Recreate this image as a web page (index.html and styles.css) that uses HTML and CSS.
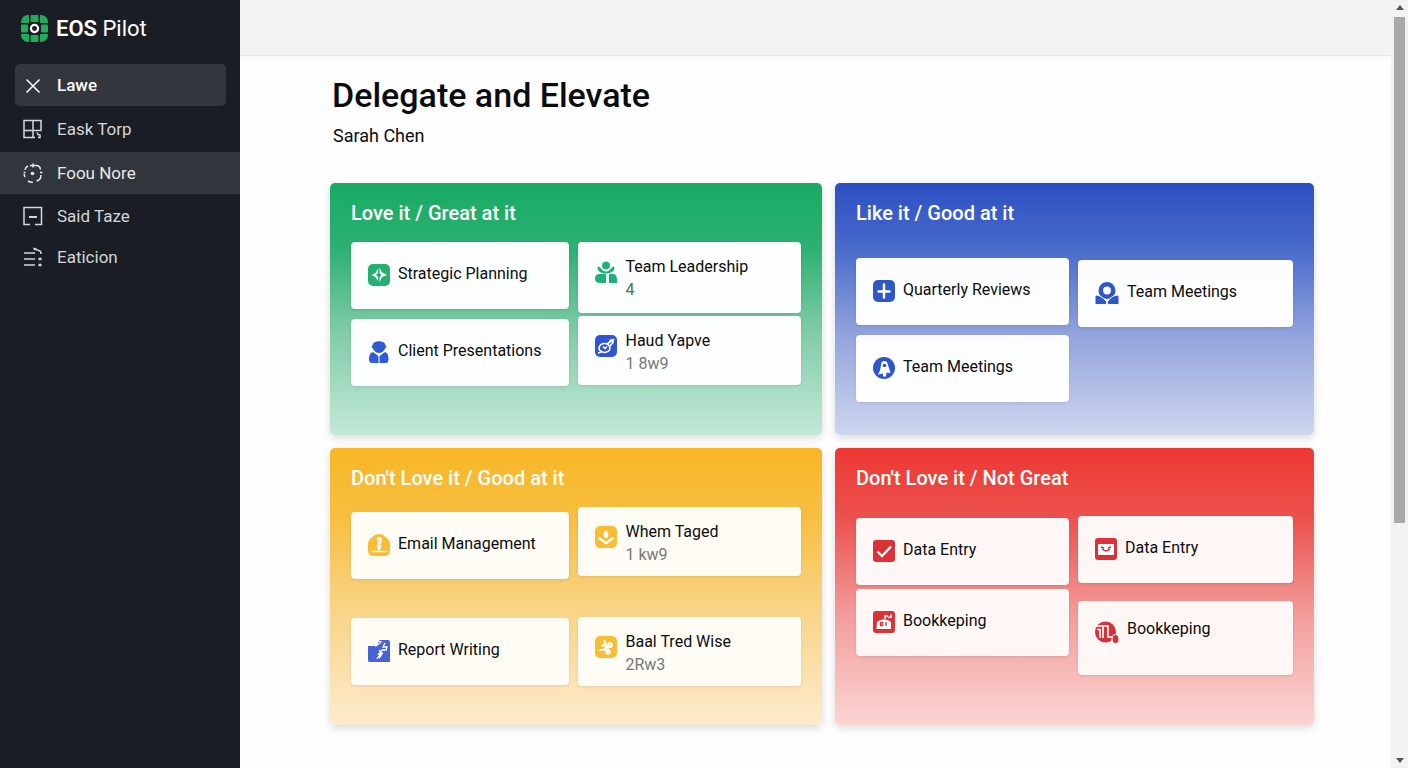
FILE: index.html
```
<!DOCTYPE html>
<html lang="en">
<head>
  <meta charset="UTF-8" />
  <meta name="viewport" content="width=device-width, initial-scale=1.0" />
  <title>EOS Pilot - Delegate and Elevate</title>
  <link rel="stylesheet" href="styles.css">
</head>
<body>
  <aside class="sidebar">
    <a class="brand" href="#">
      <svg class="brand-icon" viewBox="0 0 27 27">
        <g fill="#22a95b">
          <path d="M8 0v8H0V7a7 7 0 0 1 7-7z" />
          <rect x="9.500" y="0" width="8" height="7" rx="1" />
          <path d="M19 0h1a7 7 0 0 1 7 7v1h-8z" />
          <rect x="0" y="9.500" width="7" height="8" rx="1" />
          <rect x="20" y="9.500" width="7" height="8" rx="1" />
          <path d="M0 19h8v8H7a7 7 0 0 1-7-7z" />
          <rect x="9.500" y="20" width="8" height="7" rx="1" />
          <path d="M19 19h8v1a7 7 0 0 1-7 7h-1z" />
        </g>
        <circle cx="13.500" cy="13.500" r="3.600" fill="none" stroke="#fff" stroke-width="2.200" />
      </svg>
      <span class="brand-name"><b>EOS</b> Pilot</span>
    </a>
    <nav class="nav">
      <a class="nav-item nav-item-boxed" href="#">
        <svg viewBox="0 0 20 20"><path d="M3.500 4.500l13 13M16.500 4.500l-13 13" /></svg>
        Lawe
      </a>
      <a class="nav-item" href="#">
        <svg viewBox="0 0 20 20"><path d="M12 18.500H1v-17h17v10H1M10 1.500v17M14 13.500l1 2 2.500.500M17 16v2.500h-2" /></svg>
        Eask Torp
      </a>
      <a class="nav-item nav-item-active" href="#">
        <svg viewBox="0 0 20 20">
          <path d="M7 2.500h6q4 0 4.500 4M18 12q0 5-4.500 6M10 19.500q-3-.300-5-1.500M2 14l-1-3M2 7q.500-3 3-4M10 .500v4M.500 9.500h2M17 9.500h2.500" />
          <circle cx="9.500" cy="10.500" r="1.800" fill="currentColor" stroke="none" />
        </svg>
        Foou Nore
      </a>
      <a class="nav-item nav-item-compact" href="#">
        <svg viewBox="0 0 20 20"><path d="M7 18.500H1v-17h17.500v17H12M1 16v3M18.500 16v3" /><path d="M6 11h8" stroke-width="2" /></svg>
        Said Taze
      </a>
      <a class="nav-item nav-item-compact" href="#">
        <svg viewBox="0 0 20 20"><path d="M1 6h11M1 12h11M1 18h11M11 2l5 1.500q2 .500 2 3.500" /><path d="M15.500 12h3M15.500 18h3" stroke-width="2.600" /><path d="M10 .500l4 1-3 2z" fill="currentColor" stroke="none" /></svg>
        Eaticion
      </a>
    </nav>
  </aside>

  <div class="page">
    <header class="topbar"></header>
    <main class="content">
      <h1>Delegate and Elevate</h1>
      <p class="person">Sarah Chen</p>

      <div class="quadrants">
        <section class="quadrant quadrant-green">
          <h2>Love it / Great at it</h2>
          <div class="columns">
            <div class="column">
              <article class="card">
                <svg class="icon" viewBox="0 0 22 22">
                  <rect width="22" height="22" rx="5" fill="#27ae72" />
                  <path d="M10 4.500v4.500L8 11l2 2v4L7.500 13 3.500 11 7.500 9zM11.500 3.500l2 4.500 5.500 3-5 2-2.500 5.500v-5l2-2.500-2-2z" fill="#fff" />
                </svg>
                <h3>Strategic Planning</h3>
              </article>
              <article class="card">
                <svg class="icon" viewBox="0 0 22 22" fill="#2f5bd7">
                  <path d="M6 1.500Q11-1 16 1.500q1.500 1.500 1.500 3l1 1-1 1.500q-2.500 5-6.500 5T4.500 7l-1-1.500 1-1q0-1.500 1.500-3z" />
                  <path d="M5 11l5.500 3.500V22H4Q1 22 1 18q0-6 4-7zM17 11l-5.500 3.500V22H18q2.500 0 2.500-4 0-6-3.500-7z" />
                  <path d="M4.500 10l6.500 5 6.500-5" stroke="#fff" fill="none" />
                </svg>
                <h3>Client Presentations</h3>
              </article>
            </div>
            <div class="column column-tight">
              <article class="card card-detail card-first">
                <svg class="icon" viewBox="0 0 22 22" fill="#1fb079">
                  <path d="M3 5.500q2 0 3.500 2.500t4.500 2.500q3 0 4.500-2.500t3.500-2.500q1.500 3-2 5.500-2.500 1.500-6 1.500T5 11Q1.500 8.500 3 5.500z" />
                  <circle cx="11" cy="4.500" r="4.500" stroke="#fff" />
                  <path d="M4.500 13H11v9H5q-5 0-5-4 0-5 4.500-5zM14 13h5q3 1 3 6v3h-8z" />
                </svg>
                <div>
                  <h3>Team Leadership</h3>
                  <p class="count">4</p>
                </div>
              </article>
              <article class="card card-detail">
                <svg class="icon" viewBox="0 0 22 22">
                  <rect width="22" height="22" rx="5" fill="#2d55d4" />
                  <g fill="none" stroke="#fff" stroke-width="1.600">
                    <ellipse cx="9.500" cy="13" rx="5.500" ry="4.500" />
                    <path d="M3 18q2 0 4-2M12 9l5-3.500 1 2-3.500 4M14.500 5.500l4-1-1 3.500M8 11.500l2 2 2-2" />
                  </g>
                </svg>
                <div>
                  <h3>Haud Yapve</h3>
                  <p>1 8w9</p>
                </div>
              </article>
            </div>
          </div>
        </section>

        <section class="quadrant quadrant-blue">
          <h2>Like it / Good at it</h2>
          <div class="columns">
            <div class="column">
              <article class="card">
                <svg class="icon" viewBox="0 0 22 22">
                  <rect width="22" height="22" rx="5" fill="#3057c8" />
                  <path d="M11 4.500v13M5.500 11.500h11" stroke="#fff" stroke-width="2.400" stroke-linecap="round" />
                  <path d="M11 7l2 4-2 4-2-4z" fill="#fff" />
                </svg>
                <h3>Quarterly Reviews</h3>
              </article>
              <article class="card">
                <svg class="icon" viewBox="0 0 22 22">
                  <circle cx="11" cy="11" r="11" fill="#3057c8" />
                  <path d="M8.500 5.500Q11 3 14 5l2 6 1.500 5-4-.500-.500 4h-3v-3l-5 1 2-4z" fill="#fff" />
                  <circle cx="11.500" cy="8.500" r="1.800" fill="#3057c8" />
                </svg>
                <h3>Team Meetings</h3>
              </article>
            </div>
            <div class="column column-low">
              <article class="card">
                <svg class="icon icon-wide" viewBox="0 0 24 22" fill="#3057c8">
                  <circle cx="12" cy="8.500" r="6.200" fill="#fff" stroke="#3057c8" stroke-width="4.600" />
                  <path d="M1 13q5 0 11 7l-1 2.500H0V14zM23 13q-6 0-11 7l1 2.500h11V14z" stroke="#fff" />
                </svg>
                <h3>Team Meetings</h3>
              </article>
            </div>
          </div>
        </section>

        <section class="quadrant quadrant-yellow">
          <h2>Don't Love it / Good at it</h2>
          <div class="columns">
            <div class="column">
              <article class="card">
                <svg class="icon" viewBox="0 0 22 22">
                  <path d="M7 1q4-2 8 0l5 4q2 2 2 6v5q0 6-6 6H6q-6 0-6-6v-5q0-4 2-6z" fill="#f8bd35" />
                  <path d="M4 17.500h15" stroke="#fff" stroke-width="1.500" />
                  <path d="M9 4l3-1 2 2-1 4 .500 3-1.500 4h-2l-1-4 1-3z" fill="#fff" />
                  <path d="M11 6v2M12 10v2" stroke="#f8bd35" />
                </svg>
                <h3>Email Management</h3>
              </article>
              <article class="card">
                <svg class="icon" viewBox="0 0 22 22">
                  <path d="M0 6h9l2-6h9q2 0 2 3v19H1q-1 0-1-2z" fill="#4a63d2" />
                  <path d="M8 0v6l5-4zM17 3l-2 4h4l-1 3h-4l-3 4 4-1M11 10l2 3-4 6M14 14l-3 4" fill="none" stroke="#fff" stroke-width="1.300" />
                </svg>
                <h3>Report Writing</h3>
              </article>
            </div>
            <div class="column">
              <article class="card card-detail">
                <svg class="icon" viewBox="0 0 22 22">
                  <rect width="22" height="22" rx="5" fill="#f8bd35" />
                  <path d="M4.500 12.500l6.500 4.500 6.500-4.500" fill="none" stroke="#fff" stroke-width="2.600" stroke-linecap="round" stroke-linejoin="round" />
                  <ellipse cx="11" cy="8.500" rx="2.300" ry="3.700" fill="#fff" />
                </svg>
                <div>
                  <h3>Whem Taged</h3>
                  <p>1 kw9</p>
                </div>
              </article>
              <article class="card card-detail">
                <svg class="icon" viewBox="0 0 22 22">
                  <rect width="22" height="22" rx="5" fill="#f8bd35" />
                  <g fill="none" stroke="#fff" stroke-width="2.200" stroke-linecap="round">
                    <path d="M9.500 5l1 3.500-3 1M5 14h4l2-3M10 9l3 2-1 4" />
                    <circle cx="15" cy="9" r="1.800" />
                    <circle cx="13" cy="16" r="1.600" />
                  </g>
                </svg>
                <div>
                  <h3>Baal Tred Wise</h3>
                  <p>2Rw3</p>
                </div>
              </article>
            </div>
          </div>
        </section>

        <section class="quadrant quadrant-red">
          <h2>Don't Love it / Not Great</h2>
          <div class="columns">
            <div class="column">
              <article class="card">
                <svg class="icon" viewBox="0 0 22 22">
                  <rect width="22" height="22" rx="3" fill="#dc3237" />
                  <path d="M4.500 11.500l4.500 4.500 9-9.500" fill="none" stroke="#fff" stroke-width="2.300" />
                </svg>
                <h3>Data Entry</h3>
              </article>
              <article class="card">
                <svg class="icon" viewBox="0 0 22 22">
                  <rect width="22" height="22" rx="3" fill="#dc3237" />
                  <path d="M4 11q3-3 7-2.500 4-.500 7 2.500v7H3.500z" fill="#fff" />
                  <path d="M12 8V5h3M15 7l3-2M18 3.500v3.500" stroke="#fff" stroke-width="1.500" fill="none" />
                  <path d="M9.500 11.500H7.500v3h2zM13 11v4" stroke="#dc3237" stroke-width="1.400" fill="none" />
                </svg>
                <h3>Bookkeping</h3>
              </article>
            </div>
            <div class="column">
              <article class="card">
                <svg class="icon" viewBox="0 0 22 22">
                  <rect width="22" height="22" rx="3" fill="#dc3237" />
                  <rect x="3" y="6" width="16" height="11" rx="1" fill="#fff" />
                  <path d="M6 9l3 1M16 9l-3 1M7 10.500q4 5 8 0" stroke="#dc3237" stroke-width="1.500" fill="none" />
                </svg>
                <h3>Data Entry</h3>
              </article>
              <article class="card card-tall">
                <svg class="icon icon-wide" viewBox="0 0 24 22">
                  <circle cx="10.500" cy="11" r="10.500" fill="#d5333a" />
                  <path d="M0 5h8v12M2 8.500h3V17M8 5h5v11h6" stroke="#fff" stroke-width="1.600" fill="none" />
                  <ellipse cx="20.500" cy="18" rx="3.500" ry="4.500" fill="#d5333a" stroke="#fff" />
                </svg>
                <h3>Bookkeping</h3>
              </article>
            </div>
          </div>
        </section>
      </div>
    </main>
  </div>

  <div class="scrollbar">
    <svg viewBox="0 0 8 5"><path d="M0 5l4-5 4 5z" /></svg>
    <div class="scrollbar-track"><div class="scrollbar-thumb"></div></div>
    <svg viewBox="0 0 8 5"><path d="M0 0l4 5 4-5z" /></svg>
  </div>
</body>
</html>
```
FILE: styles.css
```
* {
  box-sizing: border-box;
}
body {
  margin: 0;
  min-height: 100vh;
  display: flex;
  font-family: Roboto, "Liberation Sans", sans-serif;
  color: #0b0c0f;
  background-color: #fefefe;
}
h1, h2, h3, p {
  margin: 0;
}

/* sidebar */
.sidebar {
  width: 240px;
  flex-shrink: 0;
  background-color: #1a1d24;
}
.brand {
  display: flex;
  align-items: center;
  gap: 8px;
  height: 56px;
  padding-left: 21px;
  color: #fff;
  font-size: 22px;
  text-decoration: none;
}
.brand-icon {
  width: 27px;
  height: 27px;
}
.brand-name b {
  font-weight: 600;
}
.nav {
  display: flex;
  flex-direction: column;
  gap: 2px;
  padding-top: 8px;
}
.nav-item {
  display: flex;
  align-items: center;
  gap: 14px;
  height: 42px;
  padding-left: 23px;
  color: #d4d6da;
  font-size: 17px;
  text-decoration: none;
}
.nav-item svg {
  width: 20px;
  height: 20px;
  fill: none;
  stroke: currentColor;
  stroke-width: 1.5;
}
.nav-item-boxed {
  margin: 0 14px 0 15px;
  padding-left: 8px;
  border-radius: 5px;
  background-color: #33363d;
  color: #fff;
  font-weight: 500;
}
.nav-item-active {
  background-color: #31353c;
  color: #e8e9eb;
}
.nav-item-compact {
  height: 39px;
}

/* page */
.page {
  flex: 1;
  min-width: 0;
}
.topbar {
  height: 56px;
  background-color: #f3f3f3;
  border-bottom: 1px solid #e6e6e6;
  box-shadow: 0 2px 5px rgba(0, 0, 0, 0.04);
}
.content {
  padding: 19px 77px 40px 90px;
}
h1 {
  padding-left: 2px;
  font-size: 34px;
  line-height: 40px;
  font-weight: 500;
}
.person {
  padding-left: 3px;
  margin: 9px 0 35px;
  font-size: 18px;
  line-height: 24px;
}
.quadrants {
  display: grid;
  grid-template-columns: 492fr 479fr;
  grid-template-rows: minmax(252px, auto) minmax(277px, auto);
  gap: 13px;
}
.quadrant {
  padding: 18px 21px 30px;
  border-radius: 5px;
  box-shadow: 0 3px 8px rgba(0, 0, 0, 0.14);
}
.quadrant h2 {
  margin-bottom: 17px;
  color: #fff;
  font-size: 20px;
  line-height: 24px;
  font-weight: 500;
}
.quadrant-green {
  background: linear-gradient(#18ab64, #2bb070 25%, #82cca9 60%, #c4e8d8);
}
.quadrant-blue {
  background: linear-gradient(#2c50c2, #4769cb 25%, #92a3dd 60%, #ced7ee);
}
.quadrant-yellow {
  background: linear-gradient(#f8b627, #f7bf40 25%, #f9d58a 60%, #fdebcd);
}
.quadrant-red {
  background: linear-gradient(#ec3833, #ec514d 25%, #f29c9a 60%, #fbd5d3);
}

/* cards */
.columns {
  display: grid;
  grid-template-columns: 213fr 215fr;
  gap: 9px;
}
.quadrant-green .columns,
.quadrant-yellow .columns {
  grid-template-columns: 218fr 222fr;
}
.column {
  display: flex;
  flex-direction: column;
  gap: 10px;
}
.column-tight {
  gap: 3px;
}
.quadrant-blue .column {
  padding-top: 16px;
}
.quadrant-blue .column-low {
  padding-top: 18px;
}
.quadrant-yellow .column {
  gap: 41px;
}
.quadrant-yellow .column:first-child {
  padding-top: 5px;
  gap: 39px;
}
.quadrant-red .column {
  padding-top: 11px;
  gap: 4px;
}
.quadrant-red .column:last-child {
  padding-top: 9px;
  gap: 18px;
}
.card {
  display: flex;
  align-items: flex-start;
  gap: 8px;
  min-height: 67px;
  padding: 20px 17px 16px;
  border-radius: 4px;
  background-color: rgba(255, 255, 255, 0.98);
  box-shadow: 0 1px 3px rgba(0, 0, 0, 0.1);
}
.quadrant-yellow .card {
  background-color: #fffcf6;
}
.quadrant-red .card {
  background-color: #fff7f6;
}
.card h3 {
  font-size: 16px;
  line-height: 24px;
  font-weight: 400;
}
.card p {
  color: #777;
  font-size: 16px;
  line-height: 22px;
}
.card .count {
  color: #3d7a5c;
}
.card-detail {
  padding-top: 13px;
  padding-bottom: 10px;
}
.card-first {
  min-height: 71px;
}
.card-tall {
  min-height: 74px;
  padding-top: 16px;
}
.icon {
  width: 22px;
  height: 22px;
  margin-top: 2px;
  flex-shrink: 0;
}
.icon-wide {
  width: 24px;
}
.card-detail .icon {
  margin-top: 6px;
}
.card-tall .icon {
  margin-top: 4px;
}

/* scrollbar */
.scrollbar {
  display: flex;
  flex-direction: column;
  align-items: center;
  width: 17px;
  padding: 5px 0;
  gap: 7px;
  background-color: #f1f2f2;
}
.scrollbar svg {
  width: 8px;
  height: 5px;
  fill: #555;
}
.scrollbar-track {
  flex: 1;
  width: 11px;
}
.scrollbar-thumb {
  height: 69%;
  background-color: #a9a9a9;
}
```
